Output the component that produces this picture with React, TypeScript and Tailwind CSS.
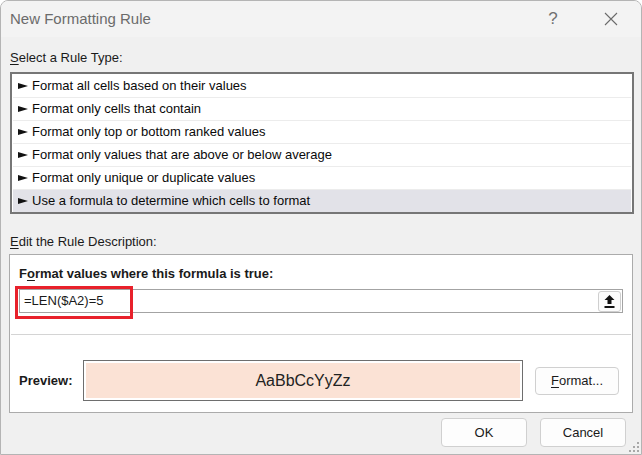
import React from "react";

const rules = [
  "Format all cells based on their values",
  "Format only cells that contain",
  "Format only top or bottom ranked values",
  "Format only values that are above or below average",
  "Format only unique or duplicate values",
  "Use a formula to determine which cells to format",
];

function Arrow() {
  return (
    <svg width="10" height="8" viewBox="0 0 10 8" className="shrink-0">
      <path d="M0 1 L10 4 L0 7 Z" fill="#111" />
      <rect x="0" y="3" width="4" height="2" fill="#111" />
    </svg>
  );
}

function UploadIcon() {
  return (
    <svg width="11" height="13" viewBox="0 0 11 13">
      <path d="M5.5 0 L10.5 5 L7.5 5 L7.5 9 L3.5 9 L3.5 5 L0.5 5 Z" fill="#111" />
      <rect x="0.5" y="11" width="10" height="2" fill="#111" />
    </svg>
  );
}

function Grip() {
  const dots = [
    [8, 0],
    [8, 4],
    [4, 4],
    [8, 8],
    [4, 8],
    [0, 8],
  ];
  return (
    <svg width="11" height="11" viewBox="0 0 11 11" className="absolute right-[1px] bottom-[1px]">
      {dots.map(([x, y], i) => (
        <rect key={i} x={x} y={y} width="2" height="2" fill="#a8a8a8" />
      ))}
    </svg>
  );
}

function DialogButton({ children, className = "" }: { children: React.ReactNode; className?: string }) {
  return (
    <div
      className={`flex items-center justify-center rounded-[4px] border border-[#d0d0d0] bg-[#fdfdfd] text-[13px] text-[#1a1a1a] ${className}`}
    >
      {children}
    </div>
  );
}

export default function App() {
  return (
    <div
      className="relative w-[642px] h-[455px] overflow-hidden rounded-t-[8px] border border-[#b4b4b4] bg-[#f0f0f0] text-[#1a1a1a]"
      style={{ fontFamily: '"Liberation Sans", Arial, sans-serif' }}
    >
      {/* Title bar */}
      <div className="flex h-[36px] items-center bg-[#f3f3f3] pl-[9px]">
        <span className="text-[15px] text-[#6b6b6b]">New Formatting Rule</span>
        <span className="ml-auto w-[20px] text-center text-[17px] font-light text-[#707070]">?</span>
        <svg width="14" height="14" viewBox="0 0 14 14" className="ml-[41px] mr-[23px]">
          <path d="M1 1 L13 13 M13 1 L1 13" stroke="#6b6b6b" strokeWidth="1.1" />
        </svg>
      </div>

      <div className="px-[8px]">
        <div className="flex h-[35px] items-end pb-[5px] pl-[1px] text-[13px]">
          <span>
            <span className="underline underline-offset-2">S</span>elect a Rule Type:
          </span>
        </div>

        {/* Rule list */}
        <div className="mr-[-1px] ml-[1px] h-[142px] border-2 border-[#767676] bg-white px-[1px] pt-[1px]">
          {rules.map((r, i) => (
            <div
              key={r}
              className={`flex items-center gap-[4px] border-b border-[#ececec] pl-[5px] text-[13px] text-[#0a0a0a] ${
                i === rules.length - 1 ? "h-[22px] border-b-0 bg-[#e2e2e8]" : "h-[23px]"
              }`}
            >
              <Arrow />
              <span>{r}</span>
            </div>
          ))}
        </div>

        <div className="flex h-[40px] items-end pb-[3px] pl-[1px] text-[13px]">
          <span>
            <span className="underline underline-offset-2">E</span>dit the Rule Description:
          </span>
        </div>

        {/* Description box */}
        <div className="relative h-[159px] border border-[#ababab] bg-white">
          <div className="flex h-[34px] items-end pb-[6px] pl-[9px] text-[13px] font-bold">
            <span>
              F<span className="underline underline-offset-2">o</span>rmat values where this formula is true:
            </span>
          </div>
          <div className="mx-[9px] flex h-[24px] items-center border border-[#a3a3a3] pr-[1px] pl-[4px] text-[13px]">
            <span>=LEN($A2)=5</span>
            <div className="ml-auto flex h-[21px] w-[23px] items-center justify-center rounded-[3px] border border-[#cfcfcf] bg-[#fbfbfb]">
              <UploadIcon />
            </div>
          </div>
          {/* highlight */}
          <div className="absolute top-[31px] left-[5px] h-[33px] w-[118px] border-[3px] border-[#e8212b]" />

          <div className="mx-[1px] mt-[21px] border-t border-[#d4d4d4]" />

          <div className="flex items-center pt-[25px] pl-[9px]">
            <span className="w-[64px] text-[13px] font-bold">Preview:</span>
            <div className="h-[41px] w-[440px] border border-[#6e6e6e] bg-white p-[2px]">
              <div className="flex h-full items-center justify-center bg-[#fbe2d5] text-[16px] text-[#222]">
                AaBbCcYyZz
              </div>
            </div>
            <DialogButton className="ml-[12px] h-[28px] w-[84px]">
              <span>
                <span className="underline underline-offset-2">F</span>ormat...
              </span>
            </DialogButton>
          </div>
        </div>

        {/* Footer buttons */}
        <div className="flex justify-end gap-[13px] pt-[5px] pr-[7px]">
          <DialogButton className="h-[29px] w-[86px]">OK</DialogButton>
          <DialogButton className="h-[29px] w-[86px]">Cancel</DialogButton>
        </div>
      </div>
      <Grip />
    </div>
  );
}
